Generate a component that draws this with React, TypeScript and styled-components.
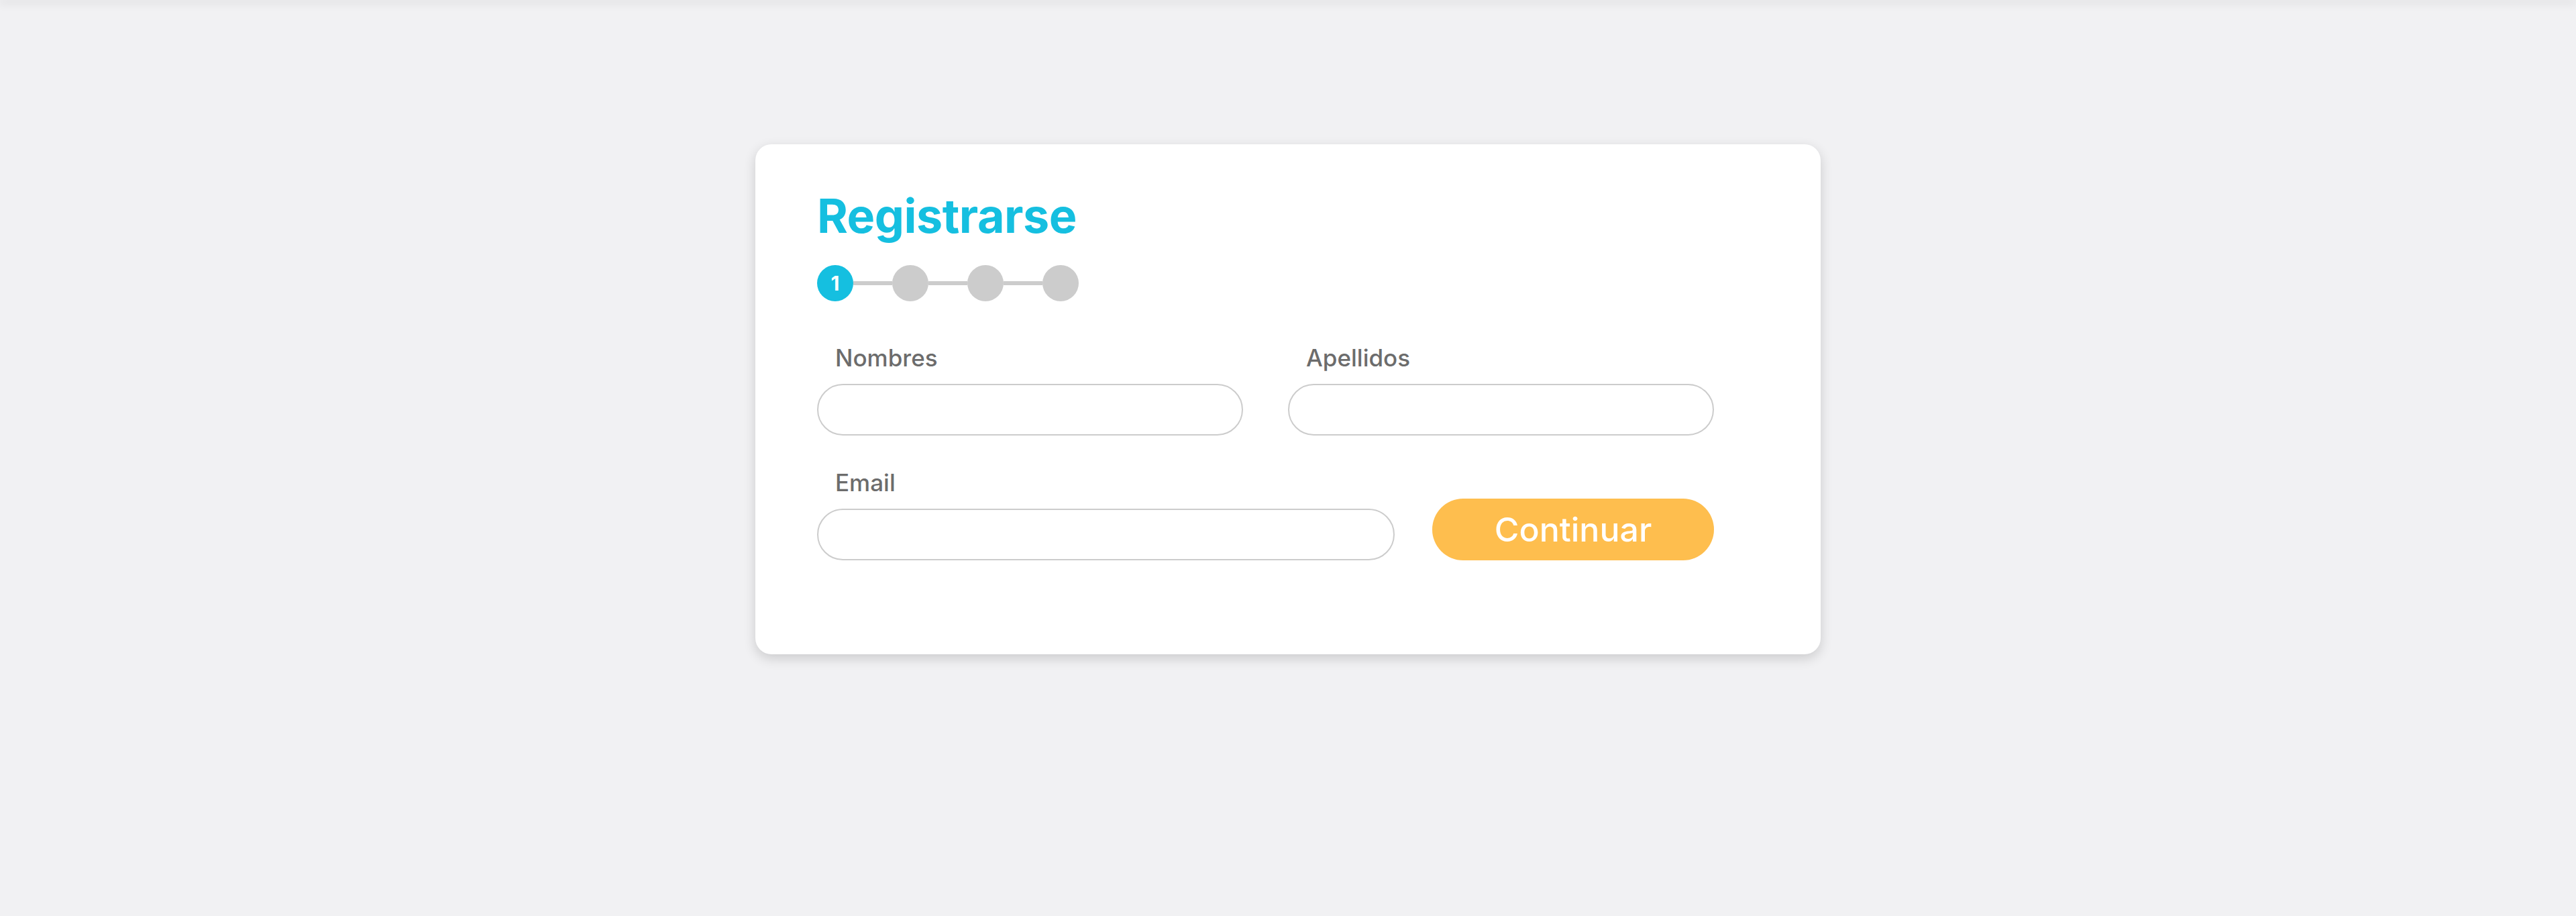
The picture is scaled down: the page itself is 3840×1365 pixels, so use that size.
import { FC } from "react";
import styled, { createGlobalStyle } from "styled-components";

const GlobalStyle = createGlobalStyle`
  html, body {
    margin: 0;
    padding: 0;
  }
  body {
    font-family: Inter, "Liberation Sans", sans-serif;
    background: #f1f1f3;
  }
`;

const steps = [1, 2, 3, 4];
const current = 1;

const App: FC = () => {
  return (
    <Page>
      <GlobalStyle />
      <TopShade />
      <Card>
        <Title>Registrarse</Title>

        <Stepper>
          {steps.map((step, i) => (
            <StepItem key={step}>
              {i > 0 && <StepLine />}
              <StepDot active={step === current}>
                {step === current ? step : ""}
              </StepDot>
            </StepItem>
          ))}
        </Stepper>

        <Form>
          <Row>
            <Field width={635}>
              <Label>Nombres</Label>
              <Input type="text" />
            </Field>
            <Field width={635}>
              <Label>Apellidos</Label>
              <Input type="text" />
            </Field>
          </Row>

          <BottomRow>
            <Field width={861}>
              <Label>Email</Label>
              <Input type="email" />
            </Field>
            <Button type="button">Continuar</Button>
          </BottomRow>
        </Form>
      </Card>
    </Page>
  );
};

const Page = styled.div`
  height: 100vh;
  overflow: hidden;
  background: #f1f1f3;
  display: flex;
  flex-direction: column;
  align-items: center;
`;

const TopShade = styled.div`
  align-self: stretch;
  flex: none;
  height: 0;
  box-shadow: 0 2px 14px 2px rgba(0, 0, 0, 0.14);
`;

const Card = styled.div`
  flex: none;
  margin-top: 215px;
  width: 1588px;
  height: 760px;
  box-sizing: border-box;
  padding: 72px 159px 0 92px;
  background: #ffffff;
  border-radius: 24px;
  box-shadow: 0 6px 18px rgba(0, 0, 0, 0.16);
  display: flex;
  flex-direction: column;
`;

const Title = styled.h1`
  margin: 0;
  font-size: 70px;
  line-height: 1;
  font-weight: 700;
  color: #15bfe0;
  letter-spacing: -0.5px;
`;

const Stepper = styled.div`
  margin-top: 38px;
  display: flex;
  align-items: center;
`;

const StepItem = styled.div`
  display: flex;
  align-items: center;
`;

const StepLine = styled.div`
  width: 58px;
  height: 6px;
  background: #cccccc;
`;

const StepDot = styled.div<{ active: boolean }>`
  width: 54px;
  height: 54px;
  border-radius: 50%;
  background: ${(p) => (p.active ? "#15bfe0" : "#cccccc")};
  color: #ffffff;
  font-size: 30px;
  font-weight: 700;
  display: flex;
  align-items: center;
  justify-content: center;
`;

const Form = styled.div`
  margin-top: 67px;
  display: flex;
  flex-direction: column;
  gap: 53px;
`;

const Row = styled.div`
  display: flex;
  gap: 67px;
`;

const BottomRow = styled.div`
  display: flex;
  align-items: flex-end;
  gap: 56px;
`;

const Field = styled.div<{ width: number }>`
  width: ${(p) => p.width}px;
  display: flex;
  flex-direction: column;
  gap: 21px;
`;

const Label = styled.label`
  padding-left: 27px;
  font-size: 35px;
  line-height: 1;
  font-weight: 500;
  color: #6c6c6c;
`;

const Input = styled.input`
  box-sizing: border-box;
  width: 100%;
  height: 77px;
  border: 2px solid #cccccc;
  border-radius: 39px;
  background: #ffffff;
  padding: 0 30px;
  font-family: inherit;
  font-size: 32px;
  outline: none;
`;

const Button = styled.button`
  width: 420px;
  height: 92px;
  border: none;
  border-radius: 46px;
  background: #febe4e;
  color: #ffffff;
  font-family: inherit;
  font-size: 50px;
  font-weight: 500;
  cursor: pointer;
`;

export default App;
